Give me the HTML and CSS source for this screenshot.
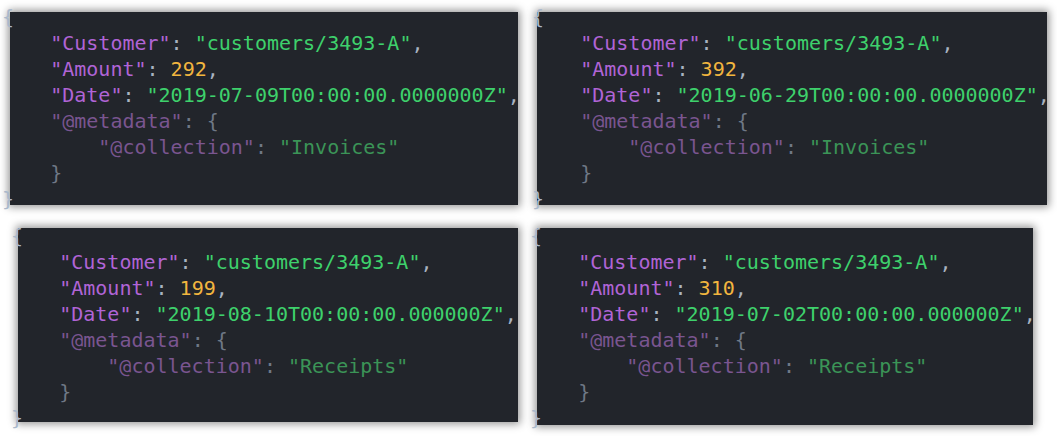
FILE: index.html
```html
<!DOCTYPE html>
<html>
<head>
<meta charset="utf-8">
<link rel="stylesheet" href="styles.css">
</head>
<body>
<div class="page">
  <div class="row row-top">
    <div class="card card-1">
<pre class="code"><span class="b">{</span>
    <span class="k">"Customer"</span><span class="p">: </span><span class="s">"customers/3493-A"</span><span class="p">,</span>
    <span class="k">"Amount"</span><span class="p">: </span><span class="n">292</span><span class="p">,</span>
    <span class="k">"Date"</span><span class="p">: </span><span class="s">"2019-07-09T00:00:00.0000000Z"</span><span class="p">,</span>
    <span class="mk">"@metadata"</span><span class="mp">: {</span>
        <span class="mk">"@collection"</span><span class="mp">: </span><span class="ms">"Invoices"</span>
    <span class="mp">}</span>
<span class="b">}</span></pre>
    </div>
    <div class="card card-2">
<pre class="code"><span class="b">{</span>
    <span class="k">"Customer"</span><span class="p">: </span><span class="s">"customers/3493-A"</span><span class="p">,</span>
    <span class="k">"Amount"</span><span class="p">: </span><span class="n">392</span><span class="p">,</span>
    <span class="k">"Date"</span><span class="p">: </span><span class="s">"2019-06-29T00:00:00.0000000Z"</span><span class="p">,</span>
    <span class="mk">"@metadata"</span><span class="mp">: {</span>
        <span class="mk">"@collection"</span><span class="mp">: </span><span class="ms">"Invoices"</span>
    <span class="mp">}</span>
<span class="b">}</span></pre>
    </div>
  </div>
  <div class="row row-bottom">
    <div class="card card-3">
<pre class="code"><span class="b">{</span>
    <span class="k">"Customer"</span><span class="p">: </span><span class="s">"customers/3493-A"</span><span class="p">,</span>
    <span class="k">"Amount"</span><span class="p">: </span><span class="n">199</span><span class="p">,</span>
    <span class="k">"Date"</span><span class="p">: </span><span class="s">"2019-08-10T00:00:00.000000Z"</span><span class="p">,</span>
    <span class="mk">"@metadata"</span><span class="mp">: {</span>
        <span class="mk">"@collection"</span><span class="mp">: </span><span class="ms">"Receipts"</span>
    <span class="mp">}</span>
<span class="b">}</span></pre>
    </div>
    <div class="card card-4">
<pre class="code"><span class="b">{</span>
    <span class="k">"Customer"</span><span class="p">: </span><span class="s">"customers/3493-A"</span><span class="p">,</span>
    <span class="k">"Amount"</span><span class="p">: </span><span class="n">310</span><span class="p">,</span>
    <span class="k">"Date"</span><span class="p">: </span><span class="s">"2019-07-02T00:00:00.000000Z"</span><span class="p">,</span>
    <span class="mk">"@metadata"</span><span class="mp">: {</span>
        <span class="mk">"@collection"</span><span class="mp">: </span><span class="ms">"Receipts"</span>
    <span class="mp">}</span>
<span class="b">}</span></pre>
    </div>
  </div>
</div>
</body>
</html>
```
FILE: styles.css
```css
html, body {
  margin: 0;
  padding: 0;
  background: #ffffff;
}

.page {
  display: flex;
  flex-direction: column;
  width: 1057px;
  height: 436px;
  overflow: hidden;
}

.row {
  display: flex;
  align-items: flex-start;
}

.row-top {
  margin-top: 12px;
}

.row-bottom {
  margin-top: 23px;
}

.card {
  background: #22252b;
  box-shadow: 0 0 8px 2px rgba(0, 0, 0, 0.42);
  flex: none;
}

.card-1 {
  margin-left: 10px;
  width: 508px;
  height: 193px;
}

.card-2 {
  margin-left: 19px;
  width: 510px;
  height: 193px;
}

.card-3 {
  margin-left: 18px;
  width: 500px;
  height: 194px;
}

.card-4 {
  margin-left: 19px;
  width: 496px;
  height: 197px;
}

.code {
  margin: 0;
  font-family: "DejaVu Sans Mono", "Liberation Mono", monospace;
  font-size: 20px;
  line-height: 26px;
  white-space: pre;
  color: #a9b3c1;
}

.card-1 .code { margin: -8px 0 0 -8px; }
.card-2 .code { margin: -8px 0 0 -5px; }
.card-3 .code { margin: -5px 0 0 -7px; }
.card-4 .code { margin: -5px 0 0 -7px; }

.b  { color: #a9b8cc; }
.k  { color: #b064d6; }
.p  { color: #a9b3c1; }
.s  { color: #3ed16c; }
.n  { color: #f2b63f; }
.mk { color: #7a5590; }
.mp { color: #6f7886; }
.ms { color: #3b9457; }
```
